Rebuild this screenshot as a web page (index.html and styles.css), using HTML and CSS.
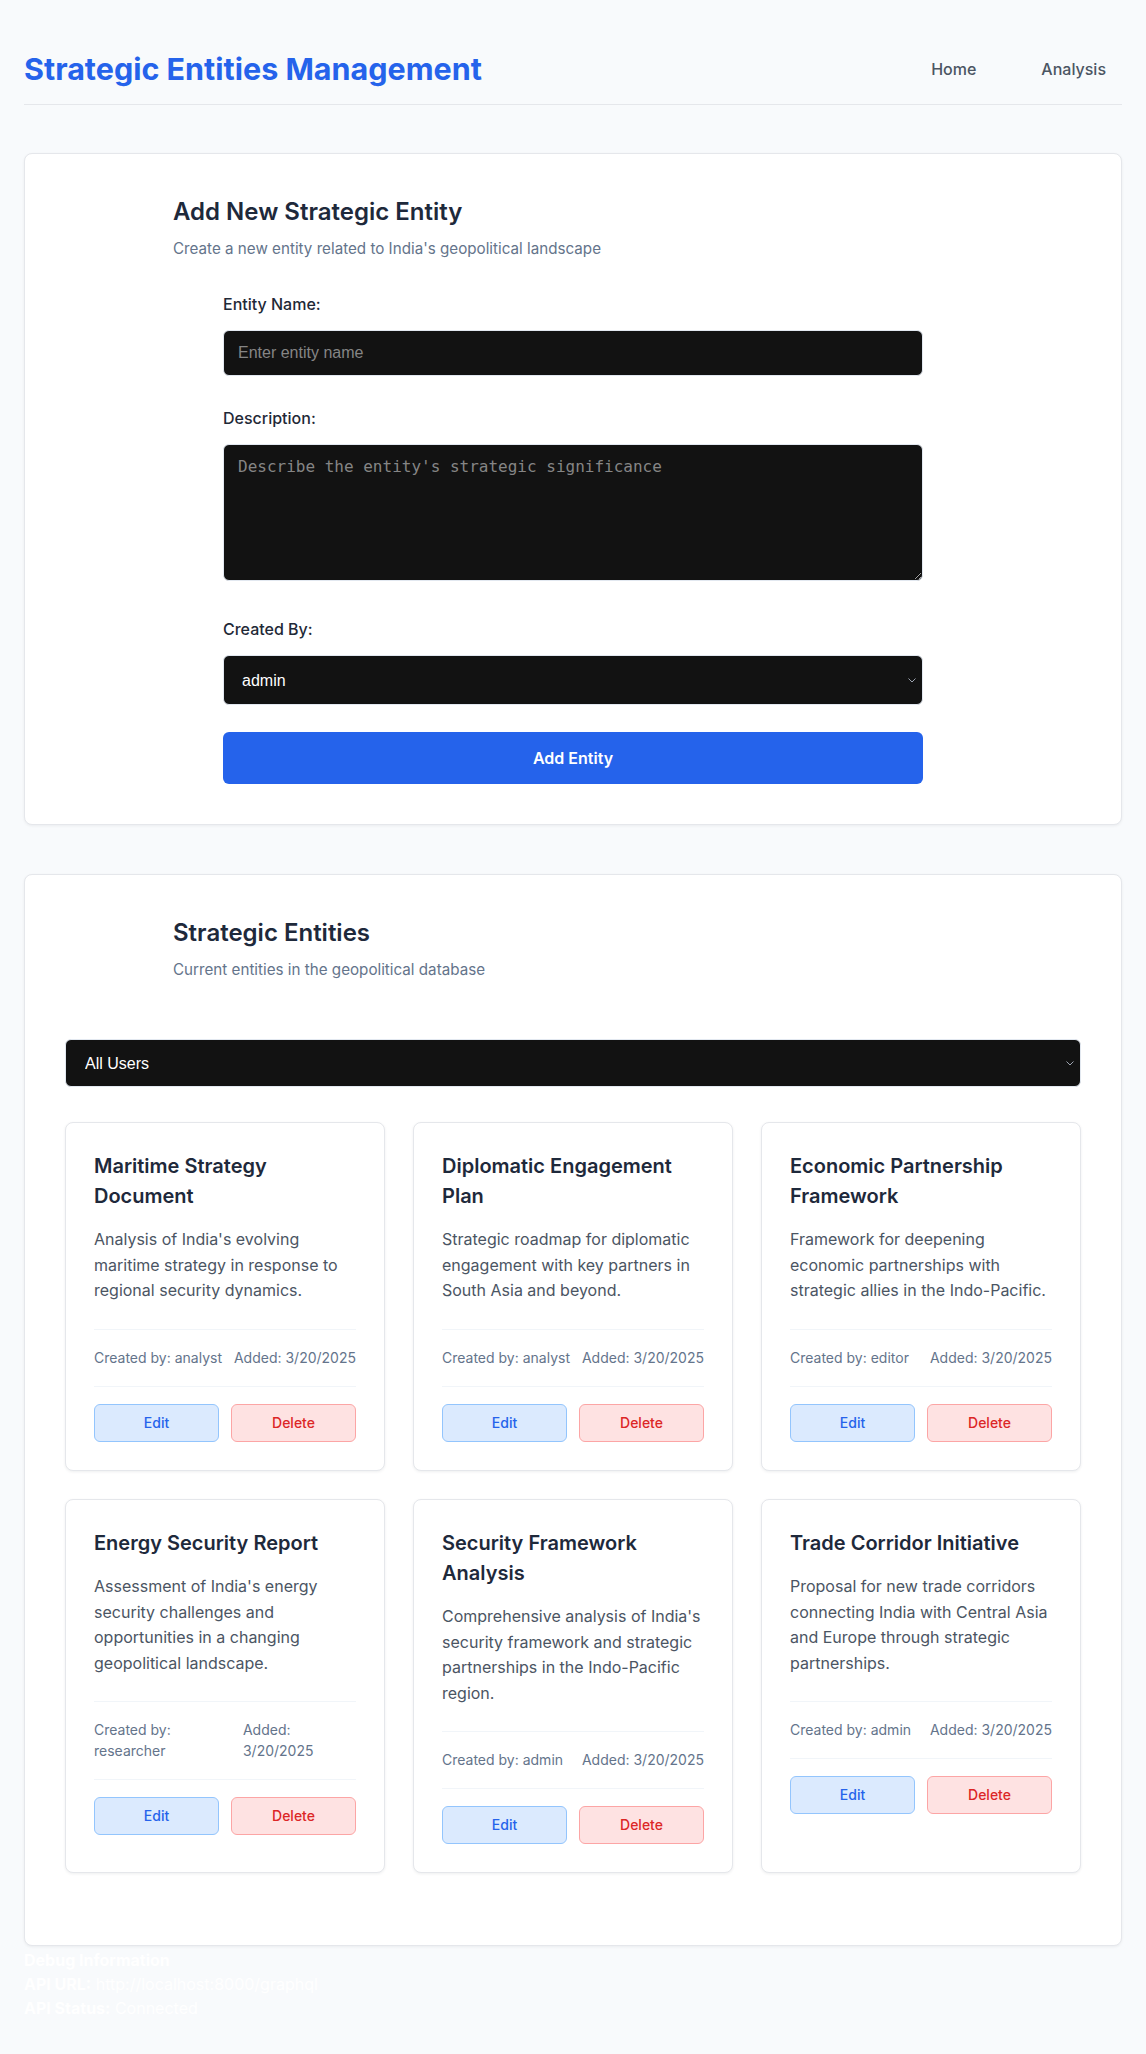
FILE: index.html
```html
<!DOCTYPE html>
<html lang="en">
<head>
<meta charset="utf-8">
<title>Strategic Entities Management</title>
<link rel="stylesheet" href="styles.css">
</head>
<body>
<div class="app">
  <header class="topbar">
    <h1 class="brand">Strategic Entities Management</h1>
    <nav class="nav">
      <a class="nav-link" href="#">Home</a>
      <a class="nav-link" href="#">Analysis</a>
    </nav>
  </header>

  <section class="panel">
    <div class="panel-head">
      <h2 class="panel-title">Add New Strategic Entity</h2>
      <p class="panel-sub">Create a new entity related to India's geopolitical landscape</p>
    </div>
    <form class="entity-form">
      <div class="field">
        <label class="field-label" for="name">Entity Name:</label>
        <input class="control control-input" id="name" type="text" placeholder="Enter entity name">
      </div>
      <div class="field field-textarea">
        <label class="field-label" for="desc">Description:</label>
        <textarea class="control control-textarea" id="desc" placeholder="Describe the entity's strategic significance"></textarea>
      </div>
      <div class="field field-last">
        <label class="field-label" for="creator">Created By:</label>
        <div class="select-wrap">
          <select class="control control-select" id="creator">
            <option>admin</option>
            <option>analyst</option>
            <option>editor</option>
            <option>researcher</option>
          </select>
          <svg class="chevron" width="8" height="5" viewBox="0 0 8 5" aria-hidden="true"><path d="M0.5 0.5 L4 4 L7.5 0.5" fill="none" stroke="#9ca3af" stroke-width="1"/></svg>
        </div>
      </div>
      <button class="submit-btn" type="button">Add Entity</button>
    </form>
  </section>

  <section class="panel">
    <div class="panel-head panel-head-list">
      <h2 class="panel-title">Strategic Entities</h2>
      <p class="panel-sub">Current entities in the geopolitical database</p>
    </div>
    <div class="select-wrap filter-wrap">
      <select class="filter-select">
        <option>All Users</option>
        <option>admin</option>
        <option>analyst</option>
        <option>editor</option>
        <option>researcher</option>
      </select>
      <svg class="chevron" width="8" height="5" viewBox="0 0 8 5" aria-hidden="true"><path d="M0.5 0.5 L4 4 L7.5 0.5" fill="none" stroke="#9ca3af" stroke-width="1"/></svg>
    </div>
    <div class="entity-grid">
      <article class="entity-card">
        <h3 class="entity-title">Maritime Strategy Document</h3>
        <p class="entity-desc">Analysis of India's evolving maritime strategy in response to regional security dynamics.</p>
        <div class="entity-meta"><span>Created by: analyst</span><span>Added: 3/20/2025</span></div>
        <div class="entity-actions"><button class="btn-edit" type="button">Edit</button><button class="btn-delete" type="button">Delete</button></div>
      </article>
      <article class="entity-card">
        <h3 class="entity-title">Diplomatic Engagement Plan</h3>
        <p class="entity-desc">Strategic roadmap for diplomatic engagement with key partners in South Asia and beyond.</p>
        <div class="entity-meta"><span>Created by: analyst</span><span>Added: 3/20/2025</span></div>
        <div class="entity-actions"><button class="btn-edit" type="button">Edit</button><button class="btn-delete" type="button">Delete</button></div>
      </article>
      <article class="entity-card">
        <h3 class="entity-title">Economic Partnership Framework</h3>
        <p class="entity-desc">Framework for deepening economic partnerships with strategic allies in the Indo-Pacific.</p>
        <div class="entity-meta"><span>Created by: editor</span><span>Added: 3/20/2025</span></div>
        <div class="entity-actions"><button class="btn-edit" type="button">Edit</button><button class="btn-delete" type="button">Delete</button></div>
      </article>
      <article class="entity-card">
        <h3 class="entity-title">Energy Security Report</h3>
        <p class="entity-desc">Assessment of India's energy security challenges and opportunities in a changing geopolitical landscape.</p>
        <div class="entity-meta"><span>Created by: researcher</span><span>Added: 3/20/2025</span></div>
        <div class="entity-actions"><button class="btn-edit" type="button">Edit</button><button class="btn-delete" type="button">Delete</button></div>
      </article>
      <article class="entity-card">
        <h3 class="entity-title">Security Framework Analysis</h3>
        <p class="entity-desc">Comprehensive analysis of India's security framework and strategic partnerships in the Indo-Pacific region.</p>
        <div class="entity-meta"><span>Created by: admin</span><span>Added: 3/20/2025</span></div>
        <div class="entity-actions"><button class="btn-edit" type="button">Edit</button><button class="btn-delete" type="button">Delete</button></div>
      </article>
      <article class="entity-card">
        <h3 class="entity-title">Trade Corridor Initiative</h3>
        <p class="entity-desc">Proposal for new trade corridors connecting India with Central Asia and Europe through strategic partnerships.</p>
        <div class="entity-meta"><span>Created by: admin</span><span>Added: 3/20/2025</span></div>
        <div class="entity-actions"><button class="btn-edit" type="button">Edit</button><button class="btn-delete" type="button">Delete</button></div>
      </article>
    </div>
  </section>

  <div class="debug">
    <h4 class="debug-title">Debug Information</h4>
    <p class="debug-line"><strong>API URL:</strong> http://localhost:8000/graphql</p>
    <p class="debug-line"><strong>API Status:</strong> Connected</p>
  </div>
</div>
</body>
</html>
```

FILE: styles.css
```css
* {
  box-sizing: border-box;
}

html, body {
  margin: 0;
  padding: 0;
}

body {
  background: #f8fafc;
  font-family: Inter, "Noto Sans", sans-serif;
  color: #1e293b;
  font-size: 16px;
  line-height: 1.5;
}

.app {
  padding: 24px 24px 24px;
}

.topbar {
  display: flex;
  align-items: center;
  justify-content: space-between;
  padding: 27px 0 16px;
  border-bottom: 1px solid #e5e7eb;
  margin-bottom: 48px;
}

.brand {
  margin: 0;
  font-size: 30.5px;
  line-height: 1.2;
  font-weight: 700;
  color: #2563eb;
}

.nav {
  display: flex;
  align-items: center;
  gap: 33px;
}

.nav-link {
  color: #4b5563;
  text-decoration: none;
  font-size: 16px;
  line-height: 24px;
  font-weight: 500;
  padding: 0 16px;
}

.panel {
  background: #ffffff;
  border: 1px solid #e5e7eb;
  border-radius: 8px;
  box-shadow: 0 1px 3px rgba(15, 23, 42, 0.06);
  padding: 40px;
  margin-bottom: 49px;
}

.panel:last-of-type {
  margin-bottom: 2px;
}

.panel-head {
  max-width: 800px;
  margin: 0 auto 32px;
}

.panel-head-list {
  margin-bottom: 57px;
}

.panel-title {
  margin: 0;
  font-size: 24px;
  line-height: 36px;
  font-weight: 600;
  color: #1e293b;
}

.panel-sub {
  margin: 8px 0 0;
  font-size: 15.2px;
  line-height: 1.5;
  color: #64748b;
}

.entity-form {
  max-width: 700px;
  margin: 0 auto;
}

.field {
  margin-bottom: 30px;
}

.field-textarea {
  margin-bottom: 36px;
}

.field-last {
  margin-bottom: 27px;
}

.field-label {
  display: block;
  font-size: 16px;
  line-height: 24px;
  font-weight: 500;
  color: #1f2937;
  margin-bottom: 14px;
}

.control {
  display: block;
  width: 100%;
  background: #121212;
  color: #ffffff;
  border: 1px solid #e2e8f0;
  border-radius: 6px;
  font-size: 16px;
  outline: none;
}

.control::placeholder {
  color: #858585;
}

.control-input {
  height: 46px;
  padding: 0 14px;
  font-family: "Liberation Sans", Arial, sans-serif;
}

.control-textarea {
  height: 137px;
  padding: 12px 14px;
  font-family: monospace;
  font-size: 16px;
  resize: vertical;
}

.select-wrap {
  position: relative;
}

.chevron {
  position: absolute;
  right: 7px;
  top: 50%;
  margin-top: -2px;
  display: block;
  pointer-events: none;
}

.control-select {
  height: 50px;
  padding: 0 24px 0 18px;
  font-family: "Liberation Sans", Arial, sans-serif;
  appearance: none;
  -webkit-appearance: none;
}

.submit-btn {
  display: block;
  width: 100%;
  height: 52px;
  border: none;
  border-radius: 6px;
  background: #2563eb;
  color: #ffffff;
  font-family: Inter, sans-serif;
  font-size: 16px;
  font-weight: 600;
}

.filter-wrap {
  margin-bottom: 35px;
}

.filter-select {
  display: block;
  width: 100%;
  height: 48px;
  padding: 0 24px 0 19px;
  background: #121212;
  color: #ffffff;
  border: 1px solid #e2e8f0;
  border-radius: 6px;
  font-family: "Liberation Sans", Arial, sans-serif;
  font-size: 16px;
  appearance: none;
  -webkit-appearance: none;
  outline: none;
}

.entity-grid {
  display: grid;
  grid-template-columns: repeat(3, 1fr);
  gap: 28px;
  margin-bottom: 32px;
}

.entity-card {
  background: #ffffff;
  border: 1px solid #e5e7eb;
  border-radius: 8px;
  box-shadow: 0 1px 3px rgba(15, 23, 42, 0.07);
  padding: 28px;
}

.entity-title {
  margin: 0 0 16px;
  font-size: 20px;
  line-height: 30px;
  font-weight: 600;
  color: #1e293b;
}

.entity-desc {
  margin: 0 0 25px;
  font-size: 16px;
  line-height: 1.6;
  color: #4b5563;
}

.entity-meta {
  display: flex;
  justify-content: space-between;
  gap: 8px;
  padding: 17px 0 18px;
  border-top: 1px solid #f1f5f9;
  border-bottom: 1px solid #f1f5f9;
  font-size: 14px;
  line-height: 1.5;
  color: #64748b;
}

.entity-actions {
  display: flex;
  gap: 12px;
  padding-top: 17px;
}

.btn-edit,
.btn-delete {
  flex: 1;
  height: 38px;
  border-radius: 6px;
  font-family: Inter, sans-serif;
  font-size: 14px;
  font-weight: 500;
  line-height: 20px;
}

.btn-edit {
  background: #dbeafe;
  border: 1px solid #93c5fd;
  color: #2563eb;
}

.btn-delete {
  background: #fee2e2;
  border: 1px solid #fca5a5;
  color: #dc2626;
}

.debug {
  color: #ffffff;
}

.debug-title {
  margin: 0;
  font-size: 16px;
  line-height: 24px;
  font-weight: 700;
}

.debug-line {
  margin: 0;
  font-size: 16px;
  line-height: 24px;
}
```
